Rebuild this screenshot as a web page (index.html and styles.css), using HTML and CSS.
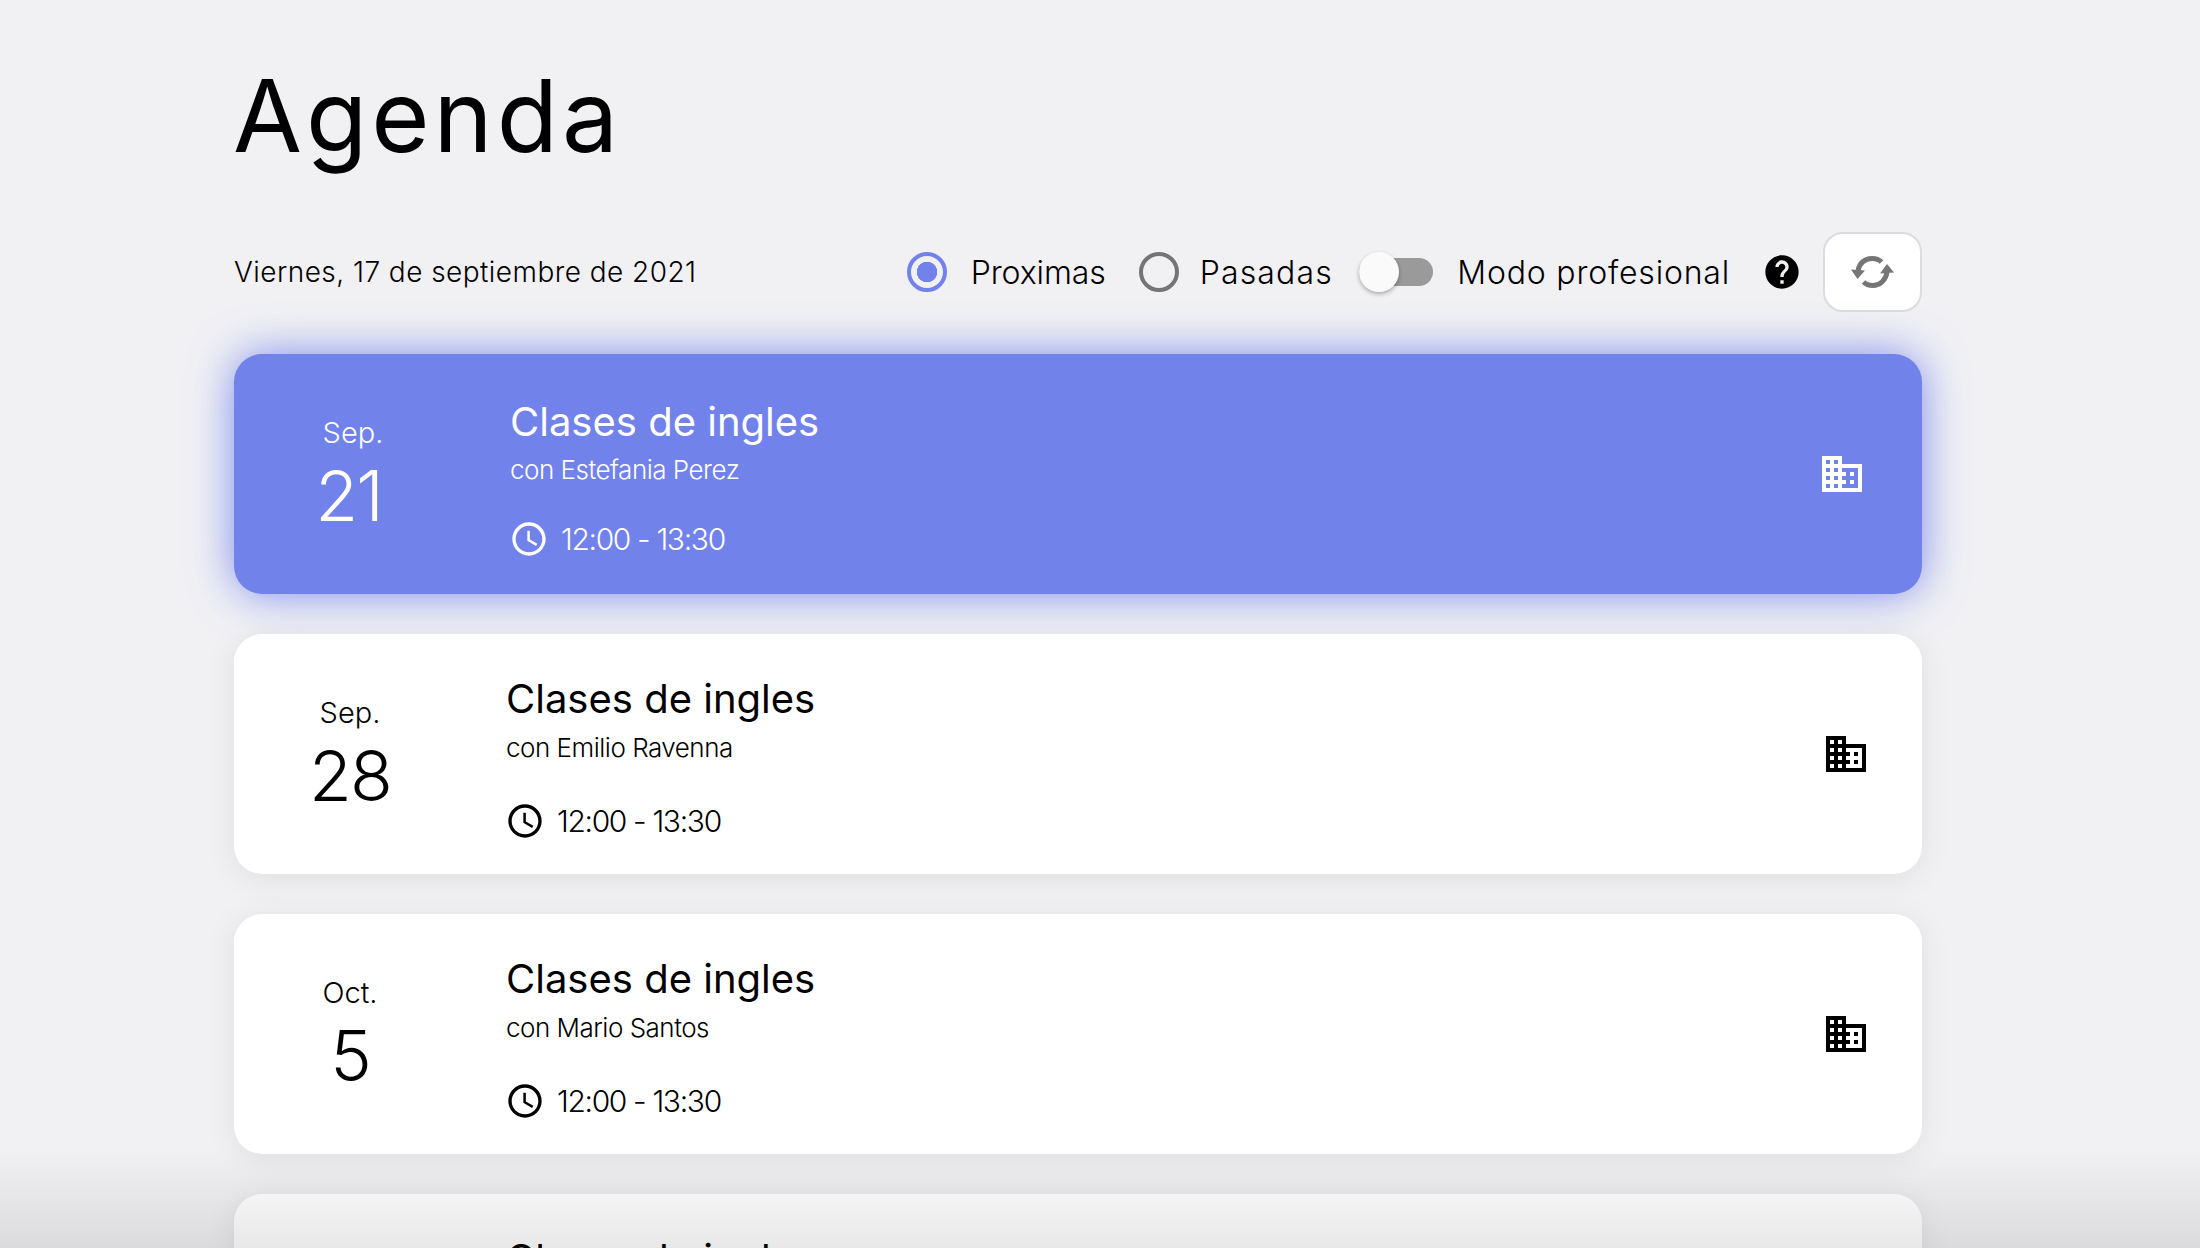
FILE: index.html
```html
<!DOCTYPE html>
<html lang="es">
<head>
<meta charset="utf-8">
<title>Agenda</title>
<link rel="stylesheet" href="styles.css">
</head>
<body>
<main class="page">
  <h1 class="title">Agenda</h1>
  <div class="toolbar">
    <div class="today">Viernes, 17 de septiembre de 2021</div>
    <div class="controls">
      <span class="radio radio-on"></span><span class="label label-proximas">Proximas</span>
      <span class="radio radio-off"></span><span class="label label-pasadas">Pasadas</span>
      <span class="switch"><span class="thumb"></span></span><span class="label label-modo">Modo profesional</span>
      <svg class="help" viewBox="0 0 24 24"><path d="M12 2C6.48 2 2 6.48 2 12s4.48 10 10 10 10-4.48 10-10S17.52 2 12 2zm1 17h-2v-2h2v2zm2.07-7.75l-.9.92C13.45 12.9 13 13.5 13 15h-2v-.5c0-1.1.45-2.1 1.17-2.83l1.24-1.26c.37-.36.59-.86.59-1.41 0-1.1-.9-2-2-2s-2 .9-2 2H8c0-2.21 1.79-4 4-4s4 1.79 4 4c0 .88-.36 1.68-.93 2.25z"/></svg>
      <button class="refresh" type="button">
        <svg class="sync" viewBox="0 0 44 32"><path class="sync-arc" d="M7 15C8 7 14 2.500 21 2.500c4 0 7 1 9.500 3.500"/><path class="sync-arc" d="M36 16c-1 8-7 13.500-14 13.500-4 0-7-1-9.500-3.500"/><path class="sync-tip" d="M0 13.500 14 14.500 6.500 23zM29 17.500 43 16.500 36 8z"/></svg>
      </button>
    </div>
  </div>
  <div class="list">
    <article class="card card-active">
      <div class="date"><div class="month">Sep.</div><div class="day">21</div></div>
      <div class="body">
        <div class="name">Clases de ingles</div>
        <div class="with">con Estefania Perez</div>
        <div class="time"><svg class="clock" viewBox="0 0 24 24"><path d="M11.990 2C6.470 2 2 6.480 2 12s4.470 10 9.990 10C17.520 22 22 17.520 22 12S17.520 2 11.990 2zM12 20c-4.420 0-8-3.580-8-8s3.580-8 8-8 8 3.580 8 8-3.580 8-8 8zM12.500 7H11v6l5.250 3.150.750-1.230-4.500-2.670z"/></svg><span>12:00 - 13:30</span></div>
      </div>
      <svg class="place" viewBox="0 0 24 24"><path d="M12 7V3H2v18h20V7H12zM6 19H4v-2h2v2zm0-4H4v-2h2v2zm0-4H4V9h2v2zm0-4H4V5h2v2zm4 12H8v-2h2v2zm0-4H8v-2h2v2zm0-4H8V9h2v2zm0-4H8V5h2v2zm10 12h-8v-2h2v-2h-2v-2h2v-2h-2V9h8v10zm-2-8h-2v2h2v-2zm0 4h-2v2h2v-2z"/></svg>
    </article>
    <article class="card">
      <div class="date"><div class="month">Sep.</div><div class="day">28</div></div>
      <div class="body">
        <div class="name">Clases de ingles</div>
        <div class="with">con Emilio Ravenna</div>
        <div class="time"><svg class="clock" viewBox="0 0 24 24"><path d="M11.990 2C6.470 2 2 6.480 2 12s4.470 10 9.990 10C17.520 22 22 17.520 22 12S17.520 2 11.990 2zM12 20c-4.420 0-8-3.580-8-8s3.580-8 8-8 8 3.580 8 8-3.580 8-8 8zM12.500 7H11v6l5.250 3.150.750-1.230-4.500-2.670z"/></svg><span>12:00 - 13:30</span></div>
      </div>
      <svg class="place" viewBox="0 0 24 24"><path d="M12 7V3H2v18h20V7H12zM6 19H4v-2h2v2zm0-4H4v-2h2v2zm0-4H4V9h2v2zm0-4H4V5h2v2zm4 12H8v-2h2v2zm0-4H8v-2h2v2zm0-4H8V9h2v2zm0-4H8V5h2v2zm10 12h-8v-2h2v-2h-2v-2h2v-2h-2V9h8v10zm-2-8h-2v2h2v-2zm0 4h-2v2h2v-2z"/></svg>
    </article>
    <article class="card">
      <div class="date"><div class="month">Oct.</div><div class="day">5</div></div>
      <div class="body">
        <div class="name">Clases de ingles</div>
        <div class="with">con Mario Santos</div>
        <div class="time"><svg class="clock" viewBox="0 0 24 24"><path d="M11.990 2C6.470 2 2 6.480 2 12s4.470 10 9.990 10C17.520 22 22 17.520 22 12S17.520 2 11.990 2zM12 20c-4.420 0-8-3.580-8-8s3.580-8 8-8 8 3.580 8 8-3.580 8-8 8zM12.500 7H11v6l5.250 3.150.750-1.230-4.500-2.670z"/></svg><span>12:00 - 13:30</span></div>
      </div>
      <svg class="place" viewBox="0 0 24 24"><path d="M12 7V3H2v18h20V7H12zM6 19H4v-2h2v2zm0-4H4v-2h2v2zm0-4H4V9h2v2zm0-4H4V5h2v2zm4 12H8v-2h2v2zm0-4H8v-2h2v2zm0-4H8V9h2v2zm0-4H8V5h2v2zm10 12h-8v-2h2v-2h-2v-2h2v-2h-2V9h8v10zm-2-8h-2v2h2v-2zm0 4h-2v2h2v-2z"/></svg>
    </article>
    <article class="card">
      <div class="date"></div>
      <div class="body">
        <div class="name">Clases de ingles</div>
      </div>
    </article>
  </div>
</main>
<div class="fade"></div>
</body>
</html>
```
FILE: styles.css
```css
* { box-sizing: border-box; }
html, body { margin: 0; height: 1248px; overflow: hidden; }
body {
  background: #f1f1f4;
  color: #000;
  font-family: Inter, "Liberation Sans", sans-serif;
  font-weight: 300;
}
.page { height: 1248px; overflow: hidden; padding: 56px 278px 0 234px; }
.title {
  margin: 0 0 56px -1px;
  font-size: 100px;
  line-height: 120px;
  font-weight: 400;
  letter-spacing: 4px;
}
.toolbar { display: flex; align-items: center; justify-content: space-between; height: 80px; }
.today { font-size: 28px; letter-spacing: 0.45px; }
.controls { display: flex; align-items: center; }
.radio { width: 40px; height: 40px; border-radius: 50%; border: 4px solid #757575; flex: none; }
.radio-on { border-color: #7282eb; background: radial-gradient(circle, #7282eb 0 10px, transparent 10.5px); }
.label { font-size: 32px; white-space: nowrap; }
.label-proximas { margin: 0 33px 0 24px; letter-spacing: -0.1px; }
.label-pasadas { margin: 0 26.500px 0 21px; letter-spacing: 1.150px; }
.label-modo { margin: 0 32px 0 24px; letter-spacing: 0.800px; }
.switch { position: relative; width: 74px; height: 28px; border-radius: 14px; background: #9a9a9a; flex: none; }
.thumb {
  position: absolute; left: 0; top: -6px;
  width: 40px; height: 40px; border-radius: 50%;
  background: #fafafa;
  box-shadow: 0 2px 4px rgba(0,0,0,.3);
}
.help { width: 40px; height: 40px; flex: none; }
.refresh {
  display: flex; align-items: center; justify-content: center;
  width: 99px; height: 80px; margin: 0 0 0 21px; padding: 0;
  background: #fff;
  border: 2px solid #dcdce0;
  border-radius: 20px;
}
.sync { width: 44px; height: 32px; }
.sync-arc { fill: none; stroke: #757575; stroke-width: 5; }
.sync-tip { fill: #757575; }

.list { display: flex; flex-direction: column; gap: 40px; margin-top: 42px; }
.card {
  display: flex;
  flex: none;
  height: 240px;
  padding-right: 52px;
  border-radius: 28px;
  background: #fff;
  box-shadow: 0 4px 32px rgba(0,0,0,.08);
}
.card-active {
  color: #fff;
  background: #7282eb;
  box-shadow: 0 0 44px rgba(114,130,235,.9);
  padding-right: 56px;
}
.date { width: 232px; flex: none; display: flex; flex-direction: column; align-items: center; padding-top: 61px; }
.month { font-size: 29px; line-height: 36px; }
.day { font-size: 70px; line-height: 80px; margin-top: 5px; letter-spacing: -2px; }
.body { flex: 1; margin-left: 40px; padding-top: 40px; }
.name { font-size: 40px; line-height: 50px; letter-spacing: 0; font-weight: 400; }
.with { font-size: 26px; line-height: 32px; margin-top: 8px; letter-spacing: -0.5px; }
.time { display: flex; align-items: center; margin-top: 37px; font-size: 30px; height: 40px; letter-spacing: -1.35px; }
.clock { width: 40px; height: 40px; fill: currentColor; margin: 0 12px 0 -1px; flex: none; }
.place { width: 48px; height: 48px; fill: currentColor; align-self: center; flex: none; }
.card-active .body { margin-left: 44px; padding-top: 43px; }
.card-active .with { margin-top: 7px; }
.card-active .time { margin-top: 33px; }
.card-active .month { margin-left: 6px; }
.card-active .day { margin-right: 3px; }

.fade {
  position: absolute; left: 0; right: 0; bottom: 0; height: 100px;
  background: linear-gradient(to bottom, rgba(0,0,0,0), rgba(0,0,0,.09));
  pointer-events: none;
}
```
